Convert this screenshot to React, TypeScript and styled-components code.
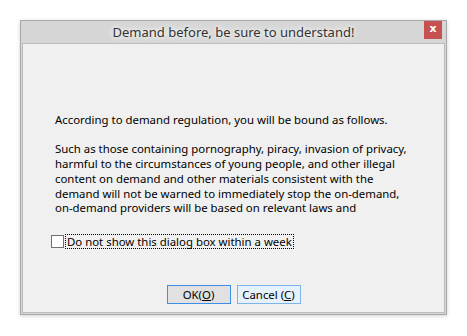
import React from "react";
import styled, { createGlobalStyle } from "styled-components";

const Global = createGlobalStyle`
  html, body { margin: 0; padding: 0; background: #ffffff; }
  body { font-family: "Segoe UI", "Noto Sans", sans-serif; }
`;

const Page = styled.div`
  padding: 20px;
  width: 467px;
  height: 336px;
  box-sizing: border-box;
`;

const Window = styled.div`
  width: 427px;
  height: 295px;
  box-sizing: border-box;
  border: 1px solid #a9a9a9;
  background: #d6d6d6;
  display: flex;
  flex-direction: column;
  padding: 0 1px 1px 1px;
  box-shadow: 0 1px 4px rgba(0, 0, 0, 0.18);
`;

const TitleBar = styled.div`
  height: 22px;
  display: grid;
  grid-template-columns: 1fr auto 1fr;
  align-items: start;
`;

const Title = styled.div`
  grid-column: 2;
  font-family: "Noto Sans", sans-serif;
  font-size: 13px;
  line-height: 23px;
  color: #333333;
  white-space: nowrap;
  text-shadow: 0 0 8px #ffffff, 0 0 4px #ffffff;
`;

const CloseButton = styled.div`
  grid-column: 3;
  justify-self: end;
  margin-right: 3px;
  width: 18px;
  height: 18px;
  background: #c75050;
  color: #ffffff;
  font-family: "DejaVu Sans", sans-serif;
  font-weight: bold;
  font-size: 11px;
  line-height: 16px;
  text-align: center;
`;

const Client = styled.div`
  flex: 1;
  background: #f0f0f0;
  border: 1px solid #bcbcbc;
  display: flex;
  flex-direction: column;
  padding: 69px 0 0 0;
  font-family: "Noto Sans", sans-serif;
  font-size: 11.4px;
  color: #000000;
`;

const Message = styled.div`
  padding-left: 32px;
  line-height: 14.7px;
`;

const Line = styled.div`
  white-space: nowrap;
`;

const Blank = styled.div`
  height: 14.7px;
`;

const CheckRow = styled.label`
  margin-top: 19px;
  margin-left: 28px;
  display: flex;
  align-items: center;
  gap: 2px;
  line-height: 13px;
`;

const Box = styled.span`
  width: 11px;
  height: 11px;
  border: 1px solid #707070;
  background: #ffffff;
  flex: none;
`;

const Focus = styled.span`
  outline: 1px dotted #000000;
  padding: 0 1px;
  white-space: nowrap;
`;

const Buttons = styled.div`
  margin-top: 37px;
  display: flex;
  justify-content: center;
  gap: 6px;
`;

const Button = styled.div<{ $default?: boolean }>`
  width: 64px;
  height: 19px;
  box-sizing: border-box;
  border: 1px solid ${(p) => (p.$default ? "#3c8fe6" : "#7eb4ea")};
  background: ${(p) => (p.$default ? "#e1e1e1" : "#e5f1fb")};
  text-align: center;
  line-height: 17px;
  font-size: 11.4px;
  color: #000000;
  white-space: nowrap;
`;

const U = styled.span`
  text-decoration: underline;
`;

export default function App() {
  return (
    <Page>
      <Global />
      <Window>
        <TitleBar>
          <Title>Demand before, be sure to understand!</Title>
          <CloseButton>x</CloseButton>
        </TitleBar>
        <Client>
          <Message>
            <Line>According to demand regulation, you will be bound as follows.</Line>
            <Blank />
            <Line>Such as those containing pornography, piracy, invasion of privacy,</Line>
            <Line>harmful to the circumstances of young people, and other illegal</Line>
            <Line>content on demand and other materials consistent with the</Line>
            <Line>demand will not be warned to immediately stop the on-demand,</Line>
            <Line>on-demand providers will be based on relevant laws and</Line>
          </Message>
          <CheckRow>
            <Box />
            <Focus>Do not show this dialog box within a week</Focus>
          </CheckRow>
          <Buttons>
            <Button $default>
              OK(<U>O</U>)
            </Button>
            <Button>
              Cancel (<U>C</U>)
            </Button>
          </Buttons>
        </Client>
      </Window>
    </Page>
  );
}
